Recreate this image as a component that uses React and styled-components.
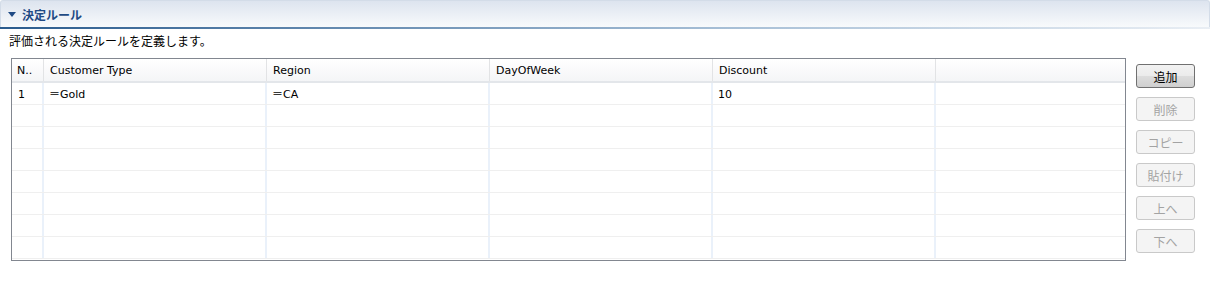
import React from "react";
import styled, { createGlobalStyle } from "styled-components";

const columns = [
  { title: "N..", width: 32 },
  { title: "Customer Type", width: 223 },
  { title: "Region", width: 223 },
  { title: "DayOfWeek", width: 223 },
  { title: "Discount", width: 223 },
  { title: "", width: null },
];

const rows = [["1", "＝Gold", "＝CA", "", "10", ""]];
const ROW_COUNT = 8;

const buttons = [
  { label: "追加", enabled: true },
  { label: "削除" },
  { label: "コピー" },
  { label: "貼付け" },
  { label: "上へ" },
  { label: "下へ" },
];

export default function App() {
  const body = Array.from({ length: ROW_COUNT }, (_, i) => rows[i] || []);

  return (
    <>
      <Global />
      <Page>
        <Section>
          <Toggle viewBox="0 0 8 5">
            <path d="M0 0 H8 L4 5 Z" fill="#1f4a84" />
          </Toggle>
          <Title>決定ルール</Title>
        </Section>
        <Description>評価される決定ルールを定義します。</Description>
        <Body>
          <Table>
            <HeaderRow>
              {columns.map((col, i) => (
                <HeadCell key={i} $width={col.width}>
                  {col.title}
                </HeadCell>
              ))}
            </HeaderRow>
            {body.map((row, r) => (
              <Row key={r}>
                {columns.map((col, i) => (
                  <Cell key={i} $width={col.width}>
                    {row[i] || ""}
                  </Cell>
                ))}
              </Row>
            ))}
          </Table>
          <Buttons>
            {buttons.map((b) => (
              <Button key={b.label} $enabled={b.enabled} disabled={!b.enabled}>
                {b.label}
              </Button>
            ))}
          </Buttons>
        </Body>
      </Page>
    </>
  );
}

const Global = createGlobalStyle`
  body {
    margin: 0;
    background: #ffffff;
    font-family: "DejaVu Sans", "Noto Sans CJK JP", sans-serif;
  }
`;

const Page = styled.div`
  width: 1212px;
  height: 281px;
`;

const Section = styled.div`
  height: 26px;
  margin: 0 2px 0 0;
  display: flex;
  align-items: center;
  gap: 6px;
  padding-left: 7px;
  border: 1px solid #d3dce8;
  border-bottom: none;
  border-radius: 3px 3px 0 0;
  background: linear-gradient(#dde4ef, #f8fafc);
  position: relative;

  &::after {
    content: "";
    position: absolute;
    left: -1px;
    right: -1px;
    bottom: -2px;
    height: 2px;
    background: linear-gradient(to right, #2b5c8e, #a7bfd6 60%, #e9eef4);
  }
`;

const Toggle = styled.svg`
  width: 8px;
  height: 5px;
`;

const Title = styled.span`
  font-family: "Noto Sans CJK JP", sans-serif;
  font-size: 12px;
  font-weight: bold;
  color: #1f4a84;
`;

const Description = styled.div`
  font-family: "Noto Sans CJK JP", sans-serif;
  font-size: 12px;
  color: #000;
  padding: 6px 0 0 9px;
  height: 25px;
  line-height: 16px;
`;

const Body = styled.div`
  display: flex;
  align-items: flex-start;
  padding-left: 11px;
`;

const Table = styled.div`
  width: 1113px;
  height: 201px;
  border: 1px solid #828790;
  background: #fff;
  overflow: hidden;
`;

const HeaderRow = styled.div`
  display: flex;
  height: 22px;
  border-bottom: 2px solid #e3e6ea;
  background: linear-gradient(#ffffff, #f4f5f7);
`;

const HeadCell = styled.div`
  ${(p) => (p.$width ? `width: ${p.$width}px;` : "flex: 1;")}
  flex-shrink: 0;
  padding-left: 6px;
  font-size: 11px;
  line-height: 24px;
  color: #000;
  border-right: 1px solid #e2e3e5;
  box-sizing: border-box;
  white-space: nowrap;
  overflow: hidden;

  &:first-child {
    padding-left: 5px;
  }

  &:last-child {
    border-right: none;
  }
`;

const Row = styled.div`
  display: flex;
  height: 21px;
  border-bottom: 1px solid #efefef;
`;

const Cell = styled.div`
  ${(p) => (p.$width ? `width: ${p.$width}px;` : "flex: 1;")}
  flex-shrink: 0;
  padding-left: 5px;
  font-size: 11px;
  line-height: 24px;
  color: #000;
  border-right: 2px solid #eaf1fa;
  box-sizing: border-box;
  white-space: nowrap;

  &:first-child {
    padding-left: 6px;
  }

  &:last-child {
    border-right: none;
  }
`;

const Buttons = styled.div`
  display: flex;
  flex-direction: column;
  gap: 9px;
  margin: 6px 0 0 10px;
`;

const Button = styled.button`
  width: 59px;
  height: 24px;
  padding: 0;
  border-radius: 3px;
  font-family: "Noto Sans CJK JP", sans-serif;
  font-size: 12px;
  border: 1px solid ${(p) => (p.$enabled ? "#707070" : "#c9c9c9")};
  color: ${(p) => (p.$enabled ? "#000" : "#a3a3a3")};
  background: ${(p) =>
    p.$enabled
      ? "linear-gradient(#f2f2f2 0%, #ebebeb 50%, #dddddd 51%, #cfcfcf 100%)"
      : "#f4f4f4"};
`;
